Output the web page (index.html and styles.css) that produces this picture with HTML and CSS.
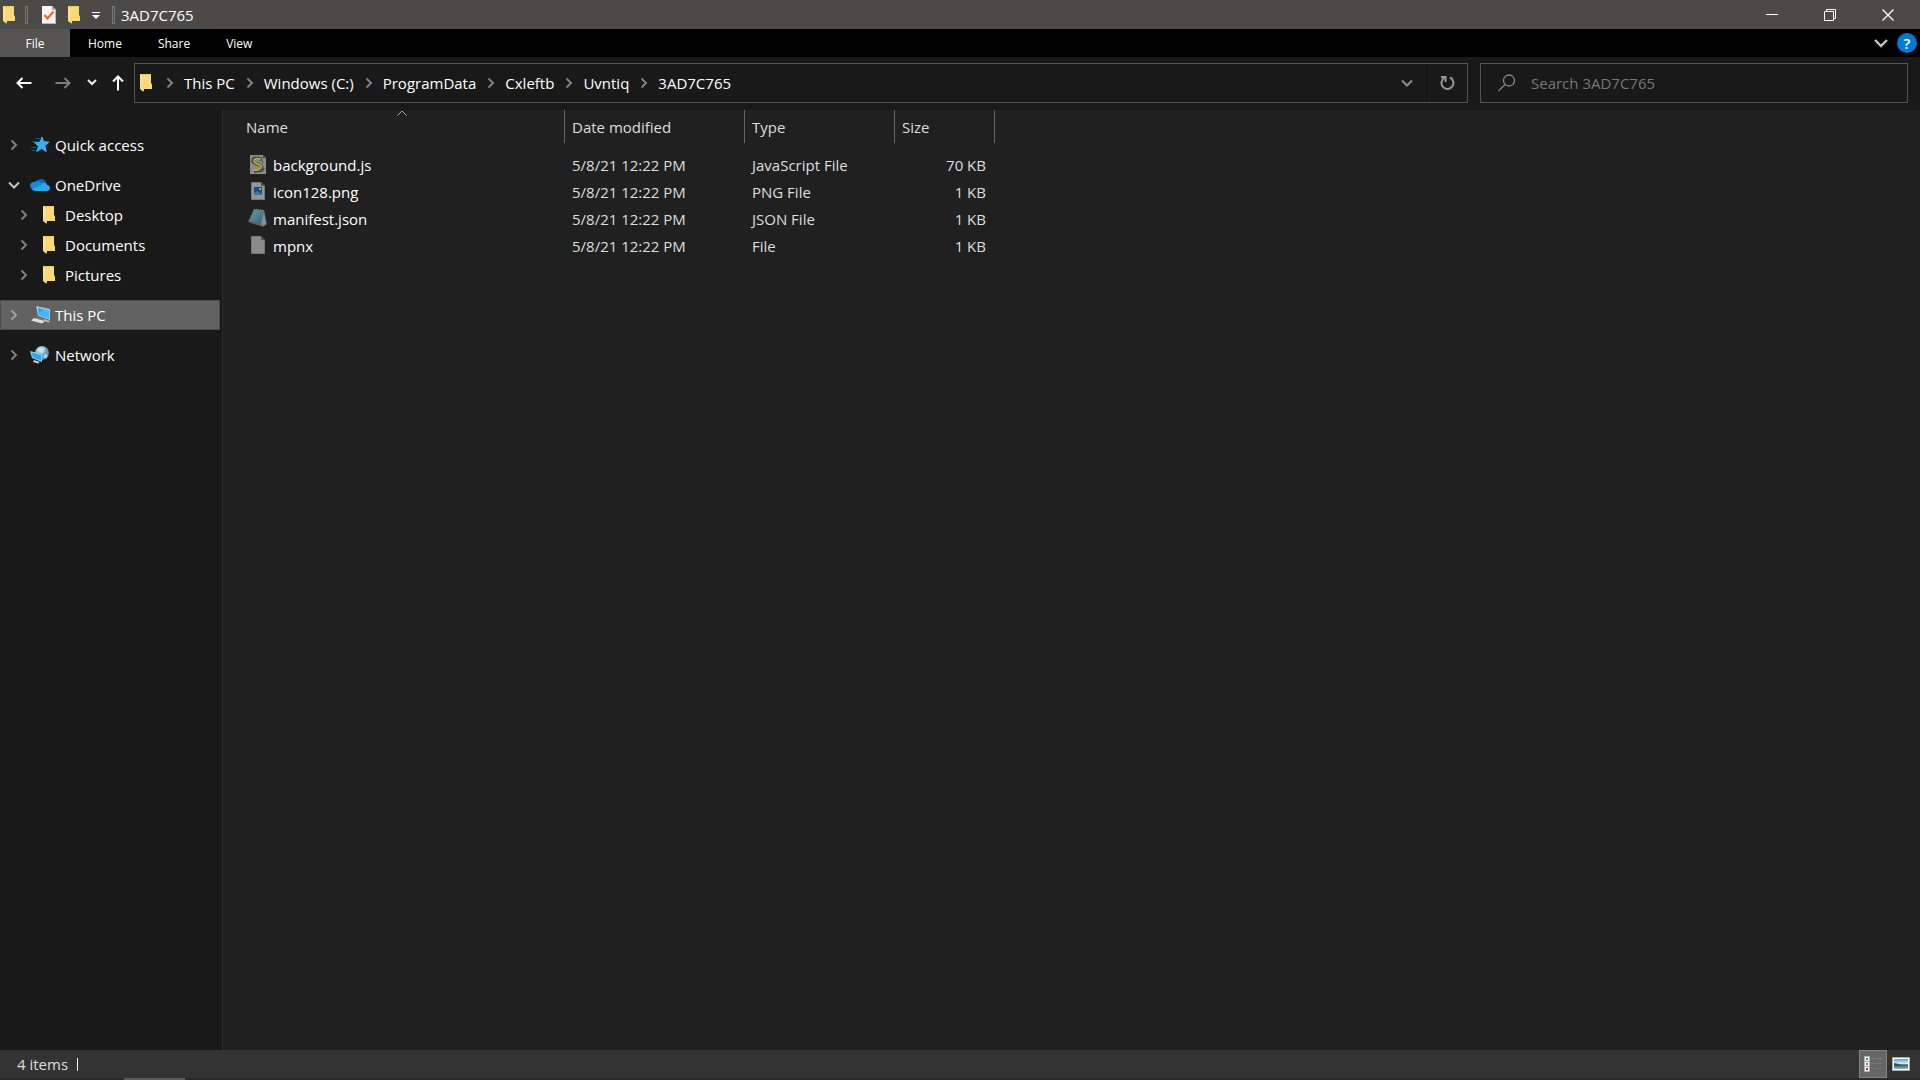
FILE: index.html
```html
<!DOCTYPE html>
<html lang="en">
<head>
<meta charset="utf-8">
<title>3AD7C765</title>
<link rel="stylesheet" href="styles.css">
</head>
<body>
<svg class="defs" aria-hidden="true">
  <defs>
    <linearGradient id="leaf" x1="0" y1="0" x2="1" y2="1"><stop offset="0" stop-color="#ffe9a8"/><stop offset="1" stop-color="#f5cf6c"/></linearGradient>
    <linearGradient id="sky" x1="0" y1="0" x2="0" y2="1"><stop offset="0" stop-color="#5a9be8"/><stop offset=".45" stop-color="#d4ecfa"/><stop offset=".6" stop-color="#3c5a52"/><stop offset="1" stop-color="#8fc0e0"/></linearGradient>
    <linearGradient id="pad" x1="0" y1="0" x2="1" y2="1"><stop offset="0" stop-color="#7b959e"/><stop offset=".5" stop-color="#4a8294"/><stop offset="1" stop-color="#35606f"/></linearGradient>
    <radialGradient id="globe" cx=".35" cy=".3" r=".8"><stop offset="0" stop-color="#c4e2f2"/><stop offset="1" stop-color="#2f76a5"/></radialGradient>
  </defs>
  <symbol id="folder" viewBox="0 0 14 18"><path d="M1 0h11v9l1 2v4H4z" fill="#f0c860"/><path d="M5 1h7v8l1 2v4H5z" fill="#f9d978"/><path d="M1 0l4 3v14l-1 .5L1 15z" fill="url(#leaf)"/></symbol>
  <symbol id="chev" viewBox="0 0 8 12"><path d="M1.500 1.500L6 6l-4.500 4.500" fill="none" stroke="currentColor" stroke-width="2"/></symbol>
  <symbol id="down" viewBox="0 0 12 8"><path d="M1 1.500l5 5 5-5" fill="none" stroke="currentColor" stroke-width="2"/></symbol>
</svg>

<header class="titlebar">
  <svg class="folder app-icon"><use href="#folder"/></svg>
  <span class="grip"></span>
  <div class="quick">
    <button aria-label="Properties"><svg width="14" height="18"><path d="M0 0h10l4 4v14H0z" fill="#f6f4f2"/><path d="M10 0v4h4z" fill="#aaa"/><path d="M13.500 4v13.500H0" fill="none" stroke="#b9b7b5"/><path d="M2.500 9l3 3.500 6-7" fill="none" stroke="#f0601c" stroke-width="2"/></svg></button>
    <button aria-label="New folder"><svg class="folder"><use href="#folder"/></svg></button>
    <button aria-label="Customize Quick Access Toolbar"><svg width="8" height="8"><path d="M0 1.500h8" stroke="#fff"/><path d="M0 4h8L4 8z" fill="#fff"/></svg></button>
  </div>
  <span class="grip"></span>
  <h1 class="title">3AD7C765</h1>
  <div class="window-buttons">
    <button aria-label="Minimize"><svg width="12" height="12"><path d="M0 5.500h12" stroke="#fff"/></svg></button>
    <button aria-label="Restore"><svg width="12" height="12" fill="none" stroke="#fff"><path d="M.5 2.500h9v9h-9zM2.500 2.500V.5h9v9h-2"/></svg></button>
    <button aria-label="Close"><svg width="12" height="12"><path d="M.5.5l11 11m0-11l-11 11" stroke="#fff" stroke-width="1.300"/></svg></button>
  </div>
</header>

<nav class="ribbon" aria-label="Ribbon">
  <button class="file">File</button>
  <button class="tab">Home</button>
  <button class="tab">Share</button>
  <button class="tab">View</button>
  <div class="ribbon-end">
    <button aria-label="Expand the ribbon"><svg width="14" height="9"><path d="M1 1l6 6 6-6" fill="none" stroke="#c4c4c4" stroke-width="2.400"/></svg></button>
    <button class="help" aria-label="Help">?</button>
  </div>
</nav>

<div class="location">
  <div class="history">
    <button aria-label="Back"><svg width="16" height="12" fill="none" stroke="#fff" stroke-width="2"><path d="M15.500 6H2M6.500 1l-5 5 5 5"/></svg></button>
    <button aria-label="Forward"><svg width="16" height="12" fill="none" stroke="#7d7d7d" stroke-width="2"><path d="M.5 6H14M9.500 1l5 5-5 5"/></svg></button>
    <button class="recent" aria-label="Recent locations"><svg width="10" height="7"><path d="M1 1l4 4 4-4" fill="none" stroke="#eee" stroke-width="2"/></svg></button>
    <button class="up" aria-label="Up"><svg width="12" height="16" fill="none" stroke="#fff" stroke-width="2"><path d="M6 15.500V2M1 6.500l5-5 5 5"/></svg></button>
  </div>
  <div class="address">
    <svg class="folder address-icon"><use href="#folder"/></svg>
    <svg class="chev"><use href="#chev"/></svg><a href="#">This PC</a>
    <svg class="chev"><use href="#chev"/></svg><a href="#">Windows (C:)</a>
    <svg class="chev"><use href="#chev"/></svg><a href="#">ProgramData</a>
    <svg class="chev"><use href="#chev"/></svg><a href="#">Cxleftb</a>
    <svg class="chev"><use href="#chev"/></svg><a href="#">Uvntiq</a>
    <svg class="chev"><use href="#chev"/></svg><a href="#">3AD7C765</a>
    <button class="previous" aria-label="Previous locations"><svg class="down"><use href="#down"/></svg></button>
    <button class="refresh" aria-label="Refresh"><svg width="15" height="16" fill="none" stroke="#989898" stroke-width="2"><path d="M10 2.500a6 6 0 1 1-6 .5"/><path d="M1 2h4.500v5"/></svg></button>
  </div>
  <label class="search">
    <svg width="18" height="18" fill="none" stroke="#858585" stroke-width="1.300"><circle cx="11" cy="6.500" r="5.500"/><path d="M7 10.500L.5 17"/></svg>
    <input type="text" placeholder="Search 3AD7C765" aria-label="Search 3AD7C765">
  </label>
</div>

<div class="content">
  <nav class="tree" aria-label="Folders">
    <ul>
      <li><a href="#"><svg class="chev"><use href="#chev"/></svg>
        <svg class="place" viewBox="0 0 20 18"><path d="M5 2.500h5M2 5.500h4M1 11.500h5M2 14.500h3" stroke="#15588c" stroke-width="1"/><path d="M12 1l1.800 4.800 5.200.3-4.200 3.700 1.500 5.700-4.800-3-4.800 3 1.800-5.300L4.500 6.700l5.500-.6z" fill="#35b0f5" stroke="#35b0f5"/></svg>Quick access</a></li>
      <li><a href="#"><svg class="down open"><use href="#down"/></svg>
        <svg class="place" viewBox="0 0 20 18"><path d="M5 7a6 5.500 0 0 1 11-1l1 5-5 3z" fill="#0868bd"/><path d="M4 6c4-2 7 0 9 3l-5 5H3C-1 12-1 6 4 6z" fill="#1688dc"/><path d="M2 13l9-4c2-4 6-2 6 0 4 0 4 6 0 6H5q-2 0-3-2z" fill="#28a8ec"/></svg>OneDrive</a>
        <ul>
          <li><a href="#"><svg class="chev"><use href="#chev"/></svg><svg class="folder"><use href="#folder"/></svg>Desktop</a></li>
          <li><a href="#"><svg class="chev"><use href="#chev"/></svg><svg class="folder"><use href="#folder"/></svg>Documents</a></li>
          <li><a href="#"><svg class="chev"><use href="#chev"/></svg><svg class="folder"><use href="#folder"/></svg>Pictures</a></li>
        </ul></li>
      <li><a href="#" class="selected" aria-current="true"><svg class="chev"><use href="#chev"/></svg>
        <svg class="place" viewBox="0 0 20 18"><path d="M6 0l14 3v11L8 10z" fill="#9fc8dc"/><path d="M8 2l11 2.500v8L9 9z" fill="#2aa2f4"/><path d="M8 9l5-6 6 1.500v8z" fill="#46b8ff"/><path d="M6 10.500l9 2.500-1 1.500-8-2z" fill="#777"/><path d="M4 12l11 3-3 2.500-11-3z" fill="#dedede"/><path d="M14 13l6 2-1 1.500-5-1.500z" fill="#bbb"/></svg>This PC</a></li>
      <li><a href="#"><svg class="chev"><use href="#chev"/></svg>
        <svg class="place" viewBox="0 0 20 18"><circle cx="12" cy="7" r="7" fill="url(#globe)"/><path d="M8 2q5-2 7 1l-2 4-4-1zm7 6l3 1-2 4-3-2z" fill="#d4e8ef" opacity=".7"/><path d="M0 5l12 3v8L2 12z" fill="#8fcdee"/><path d="M1.500 6.500L11 9v5.500l-8-3z" fill="#2ea4f2"/><path d="M4 14l6 2-2 1.500-5-1.500z" fill="#ccc"/></svg>Network</a></li>
    </ul>
  </nav>

  <main class="files">
    <table>
      <thead>
        <tr>
          <th class="c-name" aria-sort="ascending">Name<svg class="sort" width="10" height="6"><path d="M.5 5.500L5 1l4.500 4.500" fill="none" stroke="#aaa"/></svg></th>
          <th class="c-date">Date modified</th>
          <th class="c-type">Type</th>
          <th class="c-size">Size</th>
        </tr>
      </thead>
      <tbody>
        <tr><td class="name"><div><svg class="doc" viewBox="0 0 20 20"><path d="M2 0h13l3 3v16H2z" fill="#8b8b8b"/><path d="M15 0v3h3z" fill="#4a4a4a"/><path d="M14 4.500q-9-3-9 1.500 0 2 6 3.500 4 2 2 4.500-2 2-7 2" fill="none" stroke="#4b4a3c" stroke-width="3.600"/><path d="M13 4.500q-7-2-7 1.500 0 2 5 3.500 4 2 1 4-2 2-6 1.500" fill="none" stroke="#b0a545" stroke-width="2"/><path d="M11 17l4-1 1-3M15 8l-2-4" fill="none" stroke="#47463c"/></svg>background.js</div></td><td>5/8/21 12:22 PM</td><td>JavaScript File</td><td class="size">70 KB</td></tr>
        <tr><td class="name"><div><svg class="doc" viewBox="0 0 20 20"><path d="M3.500.5h9.500l3.500 3.500v13.500h-13z" fill="#969696" stroke="#777"/><path d="M13 0v4h4z" fill="#555"/><path d="M6 5h8v8H6z" fill="#174f83"/><path d="M6 11l3-2 5 3v1H6z" fill="#3b78a5"/><path d="M11 6h2v2h-2z" fill="#7da9c6"/></svg>icon128.png</div></td><td>5/8/21 12:22 PM</td><td>PNG File</td><td class="size">1 KB</td></tr>
        <tr><td class="name"><div><svg class="doc" viewBox="0 0 20 20"><path d="M6 0l10 1 3 14-4 3L0 13z" fill="#5c5f60"/><path d="M6 1l10 1-3 13L1 12z" fill="url(#pad)"/><path d="M16 2l2 13-3 2-2-2z" fill="#8b8f90"/><path d="M6 .5l10 1" stroke="#999" stroke-dasharray="1 1"/></svg>manifest.json</div></td><td>5/8/21 12:22 PM</td><td>JSON File</td><td class="size">1 KB</td></tr>
        <tr><td class="name"><div><svg class="doc" viewBox="0 0 20 20"><path d="M3.500.5h9.500l3.500 3.500v13.500h-13z" fill="#8b8b8b" stroke="#777"/><path d="M13 0v4h4z" fill="#505050"/></svg>mpnx</div></td><td>5/8/21 12:22 PM</td><td>File</td><td class="size">1 KB</td></tr>
      </tbody>
    </table>
  </main>
</div>

<footer class="status">
  <span class="count">4 items</span>
  <div class="views">
    <button class="active" aria-label="Details view"><svg width="18" height="16"><path d="M.5.500h5v15h-5z" fill="#f4f4f4" stroke="#b5b5b5"/><path d="M0 5.500h6M0 10.500h6" stroke="#aaa"/><path d="M2 2h2v2H2z" fill="#3a8b96"/><path d="M2 7h2v2H2z" fill="#8d8a42"/><path d="M2 12h2v2H2z" fill="#c22a20"/><path d="M7 2.500h11M7 7.500h11M7 12.500h11" stroke="#7c7c7c" stroke-dasharray="5 1"/></svg></button>
    <button aria-label="Large thumbnails"><svg width="18" height="14"><path d="M.5.5h17v13H.5z" fill="#fff" stroke="#aaa"/><path d="M2 2h14v10H2z" fill="url(#sky)"/><path d="M2 6l5 1 4 2H2z" fill="#35564c"/></svg></button>
  </div>
</footer>
<div class="taskbar-edge"><span></span></div>
</body>
</html>
```
FILE: styles.css
```css
* { box-sizing: border-box; }

body {
  margin: 0;
  min-height: 100vh;
  display: flex;
  flex-direction: column;
  background: #202020;
  color: #fff;
  font: 15px/20px "Open Sans", "Noto Sans", sans-serif;
}

button {
  display: flex;
  align-items: center;
  justify-content: center;
  padding: 0;
  border: 0;
  background: none;
  color: inherit;
  font: inherit;
}

a { color: inherit; text-decoration: none; }
ul { list-style: none; margin: 0; padding: 0; }
svg { flex: none; }

.defs { position: absolute; width: 0; height: 0; }
.folder { width: 14px; height: 18px; }
.chev { width: 8px; height: 12px; color: #808080; }
.down { width: 12px; height: 8px; color: #8c8c8c; }

/* Title bar */
.titlebar {
  display: flex;
  align-items: center;
  height: 29px;
  padding-left: 2px;
  background: #4c4a48;
}
.app-icon { margin-right: 9px; }
.grip { width: 3px; height: 18px; border: 1px solid #777; }
.quick { display: flex; align-items: center; gap: 11px; margin: 0 12px 0 14px; }
.title { margin: 0 0 0 6px; font-size: 15px; font-weight: 400; line-height: 20px; }
.window-buttons { display: flex; margin-left: auto; padding-right: 3px; }
.window-buttons button { width: 58px; height: 29px; }

/* Ribbon tabs */
.ribbon {
  display: flex;
  align-items: stretch;
  height: 28px;
  background: #000;
  font-size: 12px;
}
.file { width: 70px; padding-top: 1px; background: #565452; }
.tab { padding: 1px 18px 0; }
.ribbon-end { display: flex; align-items: center; gap: 9px; margin-left: auto; padding-right: 3px; }
.help {
  width: 20px;
  height: 20px;
  border-radius: 50%;
  background: #0078d7;
  font-size: 15px;
  font-weight: 600;
}

/* Navigation and address */
.location {
  display: flex;
  align-items: center;
  height: 53px;
  padding: 0 12px 2px 0;
  background: #191919;
}
.history { display: flex; align-items: center; width: 134px; padding-left: 4px; }
.history button { width: 39px; height: 39px; }
.history .recent { width: 20px; }
.history .up { width: 32px; }
.address, .search {
  display: flex;
  align-items: center;
  height: 40px;
  border: 1px solid #535353;
}
.address { flex: 1; margin-right: 12px; padding-left: 4px; }
.address a { margin: 0 11px 0 10px; }
.address-icon { margin-right: 13px; }
.previous { width: 38px; height: 38px; margin-left: auto; }
.refresh { width: 41px; height: 38px; border-left: 1px solid #111; }
.search { width: 428px; gap: 15px; padding-left: 17px; }
.search input {
  flex: 1;
  min-width: 0;
  padding: 0;
  border: 0;
  outline: 0;
  background: none;
  color: #fff;
  font: inherit;
}
.search input::placeholder { color: #777; opacity: 1; }

/* Folder tree */
.content { display: flex; flex: 1; }
.tree {
  width: 223px;
  padding: 20px 2px 0 0;
  border-right: 1px solid #2b2b2b;
  background: #191919;
}
.tree > ul { display: grid; gap: 10px; }
.tree a {
  display: flex;
  align-items: center;
  height: 30px;
  padding-left: 9px;
  border: 1px solid transparent;
}
.tree .place { width: 20px; height: 18px; margin: 0 5px 0 12px; }
.tree .open { margin: 0 -2px; color: #c4c4c4; }
.tree li li a { padding-left: 19px; }
.tree li li .folder { margin: 0 9px 0 14px; }
.tree .selected { background: #626262; border-color: #4b4b4b; }
.tree .selected .chev { color: #a0a0a0; }

/* File list */
.files { flex: 1; color: #dedede; }
.files table { border-collapse: separate; border-spacing: 0; table-layout: fixed; width: 772px; }
.files th {
  position: relative;
  height: 33px;
  padding: 0 7px;
  border-right: 1px solid #636363;
  font-weight: 400;
  text-align: left;
}
.files tbody::before { content: ""; display: block; height: 8px; }
.files th.c-name { width: 342px; padding-left: 23px; }
.c-date { width: 180px; }
.c-type { width: 150px; }
.c-size { width: 100px; }
.sort { position: absolute; top: 0; left: calc(50% + 3px); }
.files td { height: 27px; padding: 0 7px; }
.files td.name { padding-left: 25px; color: #fff; }
.name div { display: flex; align-items: center; gap: 5px; }
.doc { width: 20px; height: 20px; }
.files td.size { padding-right: 9px; text-align: right; }

/* Status bar */
.status {
  display: flex;
  align-items: center;
  height: 28px;
  padding: 0 5px 0 17px;
  background: #333;
}
.count { display: flex; align-items: center; gap: 9px; color: #dedede; }
.count::after { content: ""; width: 1px; height: 13px; background: #fff; }
.views { display: flex; margin-left: auto; }
.views button { width: 28px; height: 28px; }
.views .active { border: 1px solid #838383; background: #666; }

.taskbar-edge { height: 2px; padding-left: 124px; background: #292929; }
.taskbar-edge span { display: block; width: 61px; height: 2px; background: #5c5c5c; }
```
